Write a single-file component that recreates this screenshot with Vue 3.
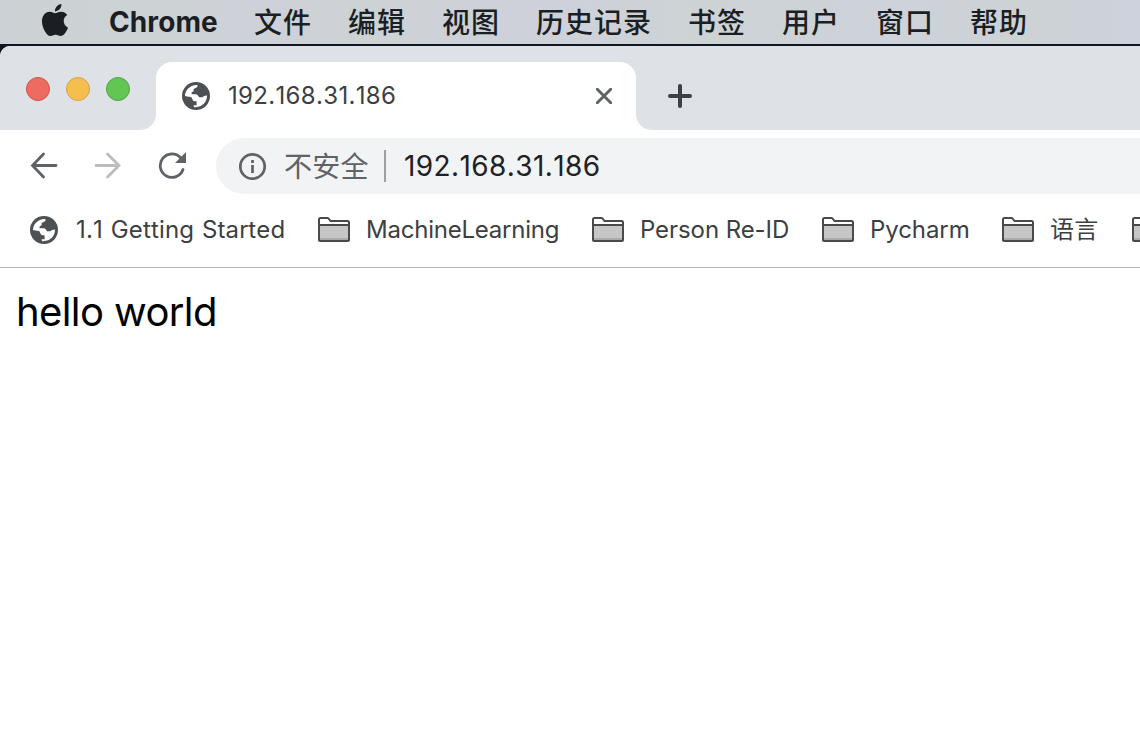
<script setup>
const menus = ['文件', '编辑', '视图', '历史记录', '书签', '用户', '窗口', '帮助']
const bookmarks = [
  { label: 'MachineLearning', cls: 'ml' },
  { label: 'Person Re-ID', cls: 'reid' },
  { label: 'Pycharm', cls: 'py' },
  { label: '语言', cls: 'lang' },
  { label: '', cls: 'more' },
]
const globe =
  'M3 14C3 8.5 7.3 3.4 14.8 3C16 3.1 15.8 4.8 14.6 5.6L11.6 7V9.3L9.6 10.3V12.2H13.6C15.6 12.2 16 13.6 17 15.2H20.6C21.6 14.6 22 13.6 25 13.6C25.2 20 20.3 25.2 13.6 25.2C12.2 25.2 11.6 25 11.6 23.2H14.6V19.3H12.6C10.6 19.3 10.6 17.6 9.6 15.6C8.6 14.6 6 14.8 3 14Z'
</script>

<template>
  <div class="screen">
    <header class="menubar">
      <svg class="apple" viewBox="0 0 24 24"><path d="M12.152 6.896c-.948 0-2.415-1.078-3.96-1.04-2.04.027-3.91 1.183-4.961 3.014-2.117 3.675-.546 9.103 1.519 12.09 1.013 1.454 2.208 3.09 3.792 3.039 1.52-.065 2.09-.987 3.935-.987 1.831 0 2.35.987 3.96.948 1.637-.026 2.676-1.48 3.676-2.948 1.156-1.688 1.636-3.325 1.662-3.415-.039-.013-3.182-1.221-3.22-4.857-.026-3.04 2.48-4.494 2.597-4.559-1.429-2.09-3.623-2.324-4.39-2.376-2-.156-3.675 1.09-4.61 1.09zM15.53 3.83c.843-1.012 1.4-2.427 1.245-3.83-1.207.052-2.662.805-3.532 1.818-.78.896-1.454 2.338-1.273 3.714 1.338.104 2.715-.688 3.559-1.701" /></svg>
      <span class="app-name">Chrome</span>
      <nav class="menus"><span v-for="m in menus" :key="m">{{ m }}</span></nav>
    </header>

    <div class="window">
      <div class="strip">
        <div class="lights"><i class="red" /><i class="yellow" /><i class="green" /></div>
        <div class="tab">
          <svg class="globe" viewBox="0 0 28 28"><circle cx="14" cy="14" r="14" /><path :d="globe" /></svg>
          <span class="tab-title">192.168.31.186</span>
          <svg class="close" viewBox="0 0 16 16"><path d="M1.3 1.3 14.7 14.7M14.7 1.3 1.3 14.7" /></svg>
        </div>
        <svg class="plus" viewBox="0 0 24 24"><path d="M12 2V22M2 12H22" /></svg>
      </div>

      <div class="toolbar">
        <svg class="nav" viewBox="0 0 28 28"><path d="M26 13.5H3M13.5 2 2.5 13.5 13.5 25" /></svg>
        <svg class="nav off" viewBox="0 0 28 28"><path d="M2 13.5H25M13.5 2 25 13.5 13.5 25" /></svg>
        <svg class="reload" viewBox="0 0 28 28">
          <path d="M22.6 5.8A11.7 11.7 0 1 0 25 17.5" /><path class="tip" d="M28 0V11H17Z" />
        </svg>
        <div class="omnibox">
          <svg class="info" viewBox="0 0 28 28"><circle cx="14.5" cy="14.5" r="12.2" /><path d="M14.5 13V21M14.5 8V11" /></svg>
          <span class="unsafe">不安全</span>
          <i class="sep" />
          <span class="url">192.168.31.186</span>
        </div>
      </div>

      <div class="bookmarks">
        <div class="bm start">
          <svg class="globe" viewBox="0 0 28 28"><circle cx="14" cy="14" r="14" /><path :d="globe" /></svg>
          <span>1.1 Getting Started</span>
        </div>
        <div v-for="b in bookmarks" :key="b.cls" class="bm" :class="b.cls">
          <svg class="folder" viewBox="0 0 32 26">
            <path class="back" d="M1 23V2.5Q1 1 2.5 1H9.5Q10.5 1 11 2L12.5 4H29.5Q31 4 31 5.5V23Q31 24 30 24H2Q1 24 1 23Z" />
            <path class="face" d="M2 9H30V23H2Z" /><path class="shade" d="M2 21H30V23H2Z" />
            <path class="back" d="M1 8H31" />
          </svg>
          <span>{{ b.label }}</span>
        </div>
      </div>

      <main class="page">hello world</main>
    </div>
  </div>
</template>

<style>
body { margin: 0; background: #0e1722; }
</style>

<style scoped>
.screen {
  width: 1140px; height: 744px; overflow: hidden; background: #0e1722;
  display: flex; flex-direction: column; gap: 2px;
  font-family: Inter, "Noto Sans CJK SC", sans-serif; white-space: nowrap;
}
svg { display: block; flex: none; fill: none; stroke-linecap: round; }
.menubar {
  height: 44px; flex: none; display: flex; align-items: center; color: #1b1f23;
  background: linear-gradient(90deg, #ccd1d5, #cdd2d4 16%, #ced1d9 20%, #cdd2d5 32%, #ced1da 48%, #cdd3d5 62%, #ced2da 78%, #cdd2d5 90%, #cdd2dc);
}
.apple { width: 32px; height: 32px; margin: -4px 0 0 39px; fill: #1b1f23; }
.app-name { width: 145px; margin-left: 38px; font-size: 28px; font-weight: 700; letter-spacing: 0.1px; line-height: 44px; }
.menus { display: flex; gap: 36px; font-family: "Noto Sans CJK SC", sans-serif; font-size: 28px; font-weight: 500; letter-spacing: 1px; line-height: 44px; margin-top: -2px; }
.window { flex: 1; border-radius: 10px 0 0 0; overflow: hidden; background: #fff; display: flex; flex-direction: column; }
.strip { height: 84px; flex: none; display: flex; align-items: flex-end; background: #dee1e6; }
.lights { width: 130px; height: 84px; margin-left: 26px; display: flex; gap: 16px; align-items: center; }
.lights i { width: 24px; height: 24px; box-sizing: border-box; border-radius: 50%; border-width: 1px; border-style: solid; margin-top: 2px; }
.red { background: #ed6b60; border-color: #d55047; }
.yellow { background: #f5bf4f; border-color: #d6a243; }
.green { background: #62c655; border-color: #50a73f; }
.tab { width: 480px; height: 68px; box-sizing: border-box; padding: 0 24px 0 26px; display: flex; align-items: center; background: #fff; border-radius: 16px 16px 0 0; position: relative; }
.tab::before, .tab::after { content: ""; position: absolute; bottom: 0; width: 16px; height: 16px; }
.tab::before { right: 100%; background: radial-gradient(circle at 0 0, transparent 15.5px, #fff 16.5px); }
.tab::after { left: 100%; background: radial-gradient(circle at 100% 0, transparent 15.5px, #fff 16.5px); }
.globe { width: 28px; height: 28px; }
.globe circle { fill: #4d5156; }
.globe path { fill: #fff; }
.tab-title { flex: 1; margin: -2px 0 0 18px; font-size: 24px; color: #3c4043; font-kerning: none; letter-spacing: 0.33px; }
.close { width: 16px; height: 16px; stroke: #5f6368; stroke-width: 3; }
.plus { width: 24px; height: 24px; margin: 0 0 22px 32px; stroke: #3c4043; stroke-width: 4; }
.toolbar { height: 72px; flex: none; display: flex; align-items: center; }
.nav { width: 28px; height: 28px; margin-left: 30px; stroke: #5f6368; stroke-width: 2.8; }
.nav.off { margin-left: 36px; stroke: #babcbe; }
.reload { width: 28px; height: 28px; margin-left: 36px; stroke: #5f6368; stroke-width: 2.8; }
.reload .tip { fill: #5f6368; stroke: none; }
.omnibox { flex: 1; height: 56px; margin-left: 30px; padding-left: 22px; display: flex; align-items: center; border-radius: 28px 0 0 28px; background: #f1f3f4; }
.info { width: 28px; height: 28px; stroke: #5f6368; stroke-width: 2.7; stroke-linecap: butt; }
.unsafe { margin: -2px 0 0 18px; width: 100px; font-family: "Noto Sans CJK SC", sans-serif; font-size: 28px; line-height: 56px; letter-spacing: 0.2px; color: #5f6368; }
.sep { width: 2px; height: 32px; background: #9aa0a6; }
.url { margin-left: 18px; font-size: 28px; font-kerning: none; letter-spacing: 0.4px; color: #202124; }
.bookmarks { height: 65px; flex: none; display: flex; align-items: center; padding-left: 30px; border-bottom: 1px solid #b6b4b6; overflow: hidden; }
.bm { flex: none; display: flex; align-items: center; height: 56px; margin-bottom: 9px; font-size: 24px; color: #3c4043; }
.bm span { margin-top: -2px; letter-spacing: -0.08px; }
.folder { width: 32px; height: 26px; margin-right: 16px; }
.folder .back { stroke: #4a4a4a; stroke-width: 2; }
.folder .face { fill: #c6c6c6; }
.folder .shade { fill: #aaa; }
.start { width: 288px; }
.start .globe { margin-right: 18px; }
.start span { font-kerning: none; letter-spacing: 0.17px; word-spacing: 0.8px; }
.ml { width: 274px; }
.ml span { letter-spacing: -0.22px; }
.reid { width: 230px; }
.py { width: 180px; }
.lang { width: 130px; }
.lang span { margin-top: -5px; letter-spacing: 0.2px; }
.page { padding: 20px 16px; font-size: 40px; line-height: 48px; letter-spacing: -0.6px; color: #000; }
</style>
